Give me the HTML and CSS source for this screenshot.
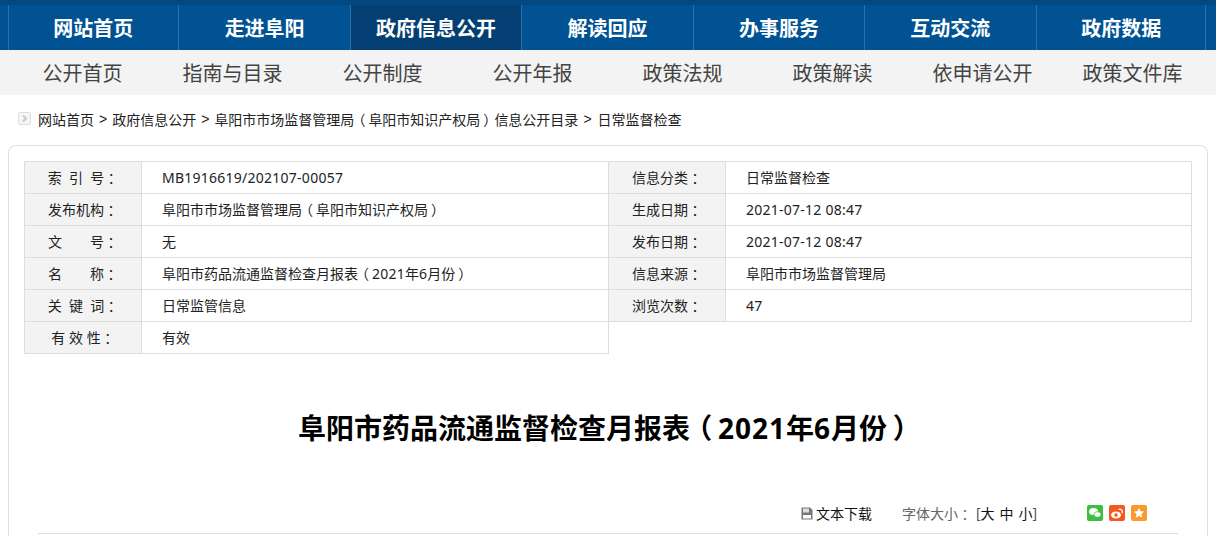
FILE: index.html
```html
<!DOCTYPE html>
<html lang="zh-CN">
<head>
<meta charset="utf-8">
<title>阜阳市药品流通监督检查月报表（2021年6月份）</title>
<link rel="stylesheet" href="styles.css">
</head>
<body>
<div class="topstrip"></div>
<nav class="mainnav">
  <a class="mainitem">网站首页</a>
  <a class="mainitem">走进阜阳</a>
  <a class="mainitem active">政府信息公开</a>
  <a class="mainitem">解读回应</a>
  <a class="mainitem">办事服务</a>
  <a class="mainitem">互动交流</a>
  <a class="mainitem">政府数据</a>
</nav>
<nav class="subnav">
  <a class="subitem">公开首页</a>
  <a class="subitem">指南与目录</a>
  <a class="subitem">公开制度</a>
  <a class="subitem">公开年报</a>
  <a class="subitem">政策法规</a>
  <a class="subitem">政策解读</a>
  <a class="subitem">依申请公开</a>
  <a class="subitem">政策文件库</a>
</nav>
<div class="crumbs">
  <svg class="crumbicon" width="13" height="13" viewBox="0 0 13 13"><rect x="0.5" y="0.5" width="12" height="12" rx="1.5" fill="#f6f6f6" stroke="#dddddd"/><path d="M5 3.5 8 6.5 5 9.5" fill="none" stroke="#cccccc" stroke-width="2"/></svg>
  <span>网站首页</span><span class="sep">&gt;</span><span>政府信息公开</span><span class="sep">&gt;</span><span>阜阳市市场监督管理局<span class="fw">（</span>阜阳市知识产权局<span class="fw">）</span>信息公开目录</span><span class="sep sep-last">&gt;</span><span>日常监督检查</span>
</div>
<main class="card">
  <div class="meta">
    <div class="label">索  引  号<span class="fw">：</span></div><div class="value"><span class="num">MB1916619/202107-00057</span></div>
    <div class="label">信息分类<span class="fw">：</span></div><div class="value">日常监督检查</div>
    <div class="label">发布机构<span class="fw">：</span></div><div class="value">阜阳市市场监督管理局<span class="fw">（</span>阜阳市知识产权局<span class="fw">）</span></div>
    <div class="label">生成日期<span class="fw">：</span></div><div class="value"><span class="num">2021-07-12 08:47</span></div>
    <div class="label">文&emsp;&emsp;号<span class="fw">：</span></div><div class="value">无</div>
    <div class="label">发布日期<span class="fw">：</span></div><div class="value"><span class="num">2021-07-12 08:47</span></div>
    <div class="label">名&emsp;&emsp;称<span class="fw">：</span></div><div class="value">阜阳市药品流通监督检查月报表<span class="fw">（</span><span class="num">2021</span>年<span class="num">6</span>月份<span class="fw">）</span></div>
    <div class="label">信息来源<span class="fw">：</span></div><div class="value">阜阳市市场监督管理局</div>
    <div class="label">关  键  词<span class="fw">：</span></div><div class="value">日常监管信息</div>
    <div class="label">浏览次数<span class="fw">：</span></div><div class="value"><span class="num">47</span></div>
    <div class="label">有 效 性<span class="fw">：</span></div><div class="value">有效</div>
  </div>
  <h1 class="title">阜阳市药品流通监督检查月报表<span class="fw">（</span><span class="num">2021</span>年<span class="num">6</span>月份<span class="fw">）</span></h1>
  <div class="tools">
    <svg class="docicon" width="12" height="13" viewBox="0 0 12 13"><path d="M0.500 0.500H9L11.500 3V12.500H0.500Z" fill="#777777"/><rect x="2" y="1.500" width="6" height="4" fill="#dddddd"/><rect x="2" y="8" width="8" height="3.500" fill="#ffffff"/></svg>
    <span class="download">文本下载</span>
    <span class="fontsize">字体大小<span class="fw">：</span></span>
    <span class="sizes"><span class="bracket">[</span><span class="size">大</span><span class="size">中</span><span class="size">小</span><span class="bracket">]</span></span>
    <span class="shares">
      <svg class="share" width="16" height="16" viewBox="0 0 16 16"><rect width="16" height="16" rx="2" fill="#3bbf41"/><ellipse cx="6.500" cy="6.500" rx="4.500" ry="3.500" fill="#ffffff"/><ellipse cx="10.500" cy="9.500" rx="3.500" ry="2.800" fill="#ffffff" stroke="#3bbf41" stroke-width="0.700"/></svg>
      <svg class="share" width="16" height="16" viewBox="0 0 16 16"><rect width="16" height="16" rx="2" fill="#f45a1e"/><ellipse cx="7" cy="10" rx="5" ry="3.500" fill="#ffffff"/><circle cx="7" cy="10" r="1.800" fill="#f45a1e"/><path d="M9.500 4.500C12 3.500 14 5.500 13 8" fill="none" stroke="#ffffff" stroke-width="1.300"/></svg>
      <svg class="share" width="16" height="16" viewBox="0 0 16 16"><rect width="16" height="16" rx="2" fill="#fb9a2b"/><path d="M8 2.800 9.600 6.200 13.200 6.600 10.500 9 11.300 12.800 8 10.900 4.700 12.800 5.500 9 2.800 6.600 6.400 6.200Z" fill="#ffffff"/></svg>
    </span>
  </div>
</main>
</body>
</html>
```

FILE: styles.css
```css
* { box-sizing: border-box; }
html, body { margin: 0; padding: 0; height: 536px; overflow: hidden; }
body {
  background: #ffffff;
  color: #333333;
  font-family: "Noto Sans", "Noto Sans CJK SC", sans-serif;
}
.fw {
  display: inline-block;
  width: 1em;
  font-feature-settings: "palt";
  text-align: center;
}
.num { letter-spacing: 0.25px; }
.topstrip { height: 5px; background: #03497f; }
.mainnav {
  display: flex;
  height: 45px;
  padding-left: 8px;
  background: #005293;
}
.mainitem {
  width: 171.43px;
  border-left: 1px solid #2d6fa6;
  color: #ffffff;
  font-size: 20px;
  font-weight: 700;
  line-height: 47px;
  text-align: center;
}
.mainitem:first-child { width: 170.43px; padding-right: 1px; }
.mainitem:last-child { width: 170.43px; padding-left: 1px; border-right: 1px solid #2d6fa6; }
.mainitem.active { background: #033f72; }
.subnav {
  display: flex;
  height: 45px;
  padding-left: 7.500px;
  background: #f3f3f3;
}
.subitem {
  width: 150px;
  color: #444444;
  font-size: 20px;
  line-height: 47px;
  text-align: center;
}
.crumbs {
  display: flex;
  align-items: center;
  height: 50px;
  padding-left: 18px;
  padding-bottom: 3px;
  color: #222222;
  font-size: 14px;
}
.crumbicon { margin-right: 7px; }
.sep { margin: 0 5px; font-family: "Liberation Sans", sans-serif; }
.sep-last { margin-right: 6px; }
.card {
  height: 391px;
  margin: 0 8px;
  padding: 15px 15px 0;
  border: 1px solid #e0e0e0;
  border-bottom: 0;
  border-radius: 8px 8px 0 0;
}
.meta {
  display: grid;
  grid-template-columns: 117px 467px 117px 466px;
  grid-auto-rows: 32px;
  border-top: 1px solid #dddddd;
  border-left: 1px solid #dddddd;
  color: #222222;
  font-size: 14px;
}
.label, .value {
  display: flex;
  align-items: center;
  padding-bottom: 1px;
  border-right: 1px solid #dddddd;
  border-bottom: 1px solid #dddddd;
  white-space: pre;
}
.label { justify-content: center; background: #f3f3f3; }
.value { padding-left: 20px; }
.title {
  margin: 54px 0 0;
  padding-right: 3px;
  color: #000000;
  font-size: 28px;
  font-weight: 700;
  line-height: 40px;
  text-align: center;
}
.title .num { letter-spacing: 1px; }
.tools {
  display: flex;
  align-items: center;
  height: 41px;
  margin: 45px 14px 0;
  padding-left: 763px;
  border-bottom: 1px solid #dddddd;
  font-size: 14px;
}
.docicon { margin-right: 3px; }
.download { color: #111111; }
.fontsize { margin-left: 30px; color: #666666; }
.sizes { display: flex; margin-left: 4px; color: #111111; }
.size + .size { margin-left: 5px; }
.bracket { color: #555555; }
.shares { display: flex; gap: 6px; margin-left: 50px; }
```
